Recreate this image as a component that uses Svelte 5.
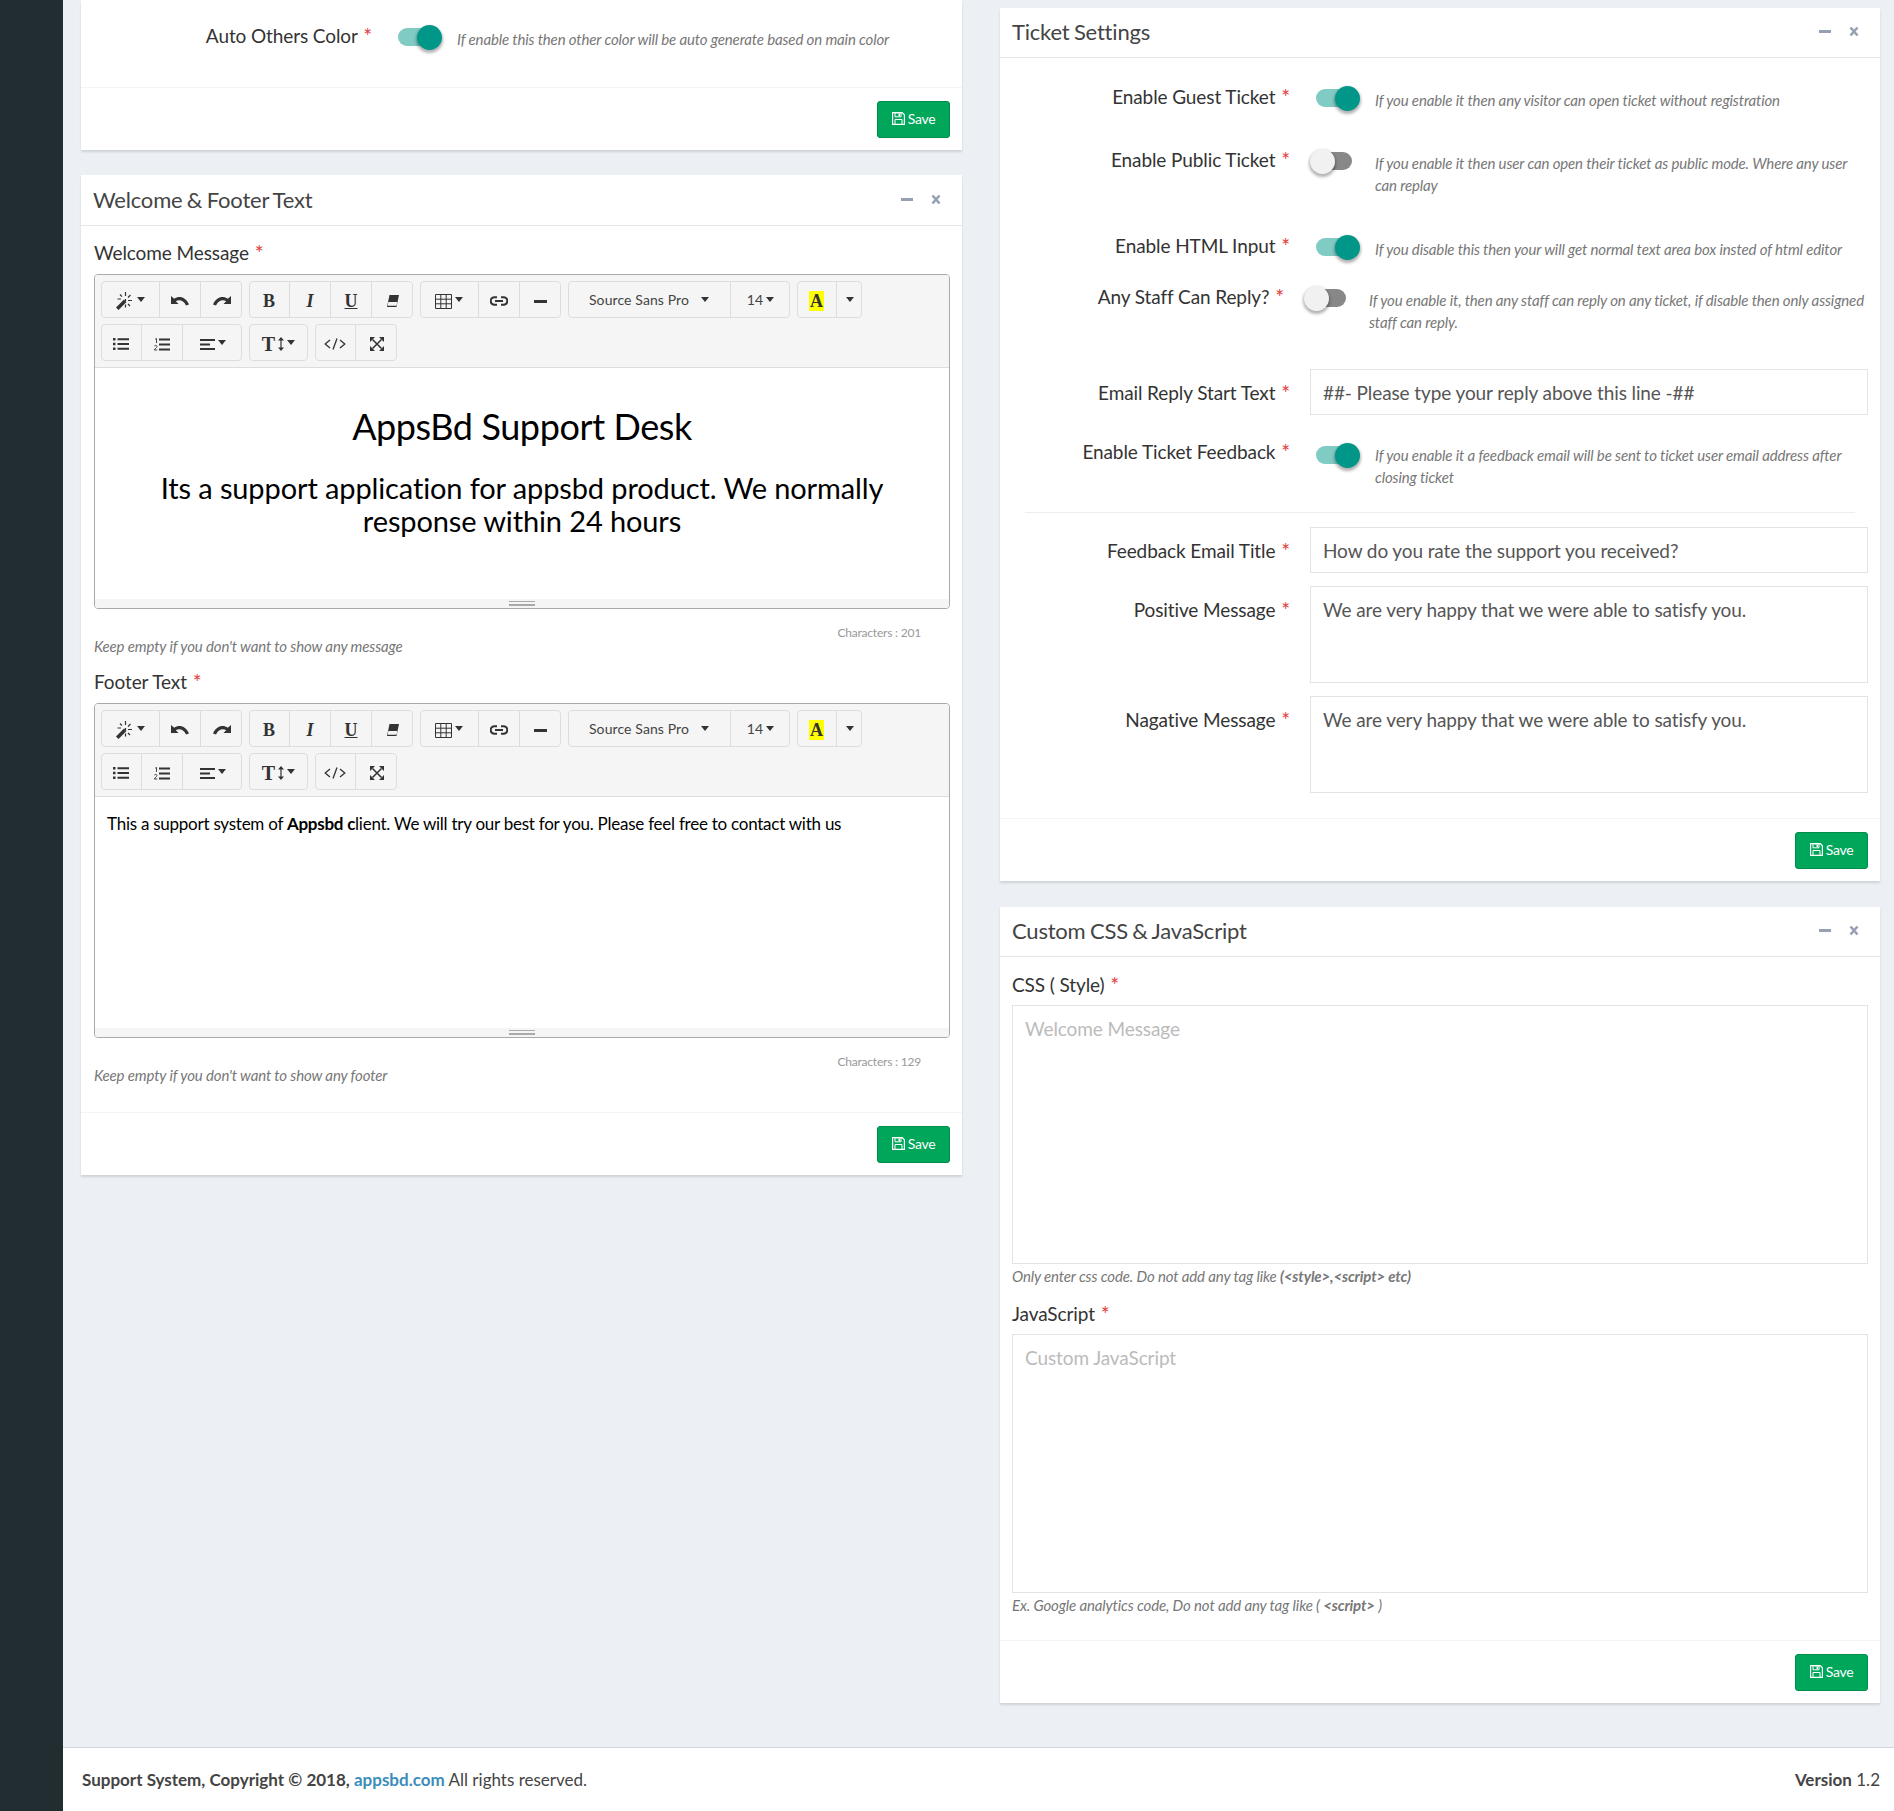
<script>
  // Summernote toolbar layout, rows of button groups.
  const toolbar = [
    [
      [{ icon: "wand", caret: true, w: "w59" }, { icon: "undo" }, { icon: "redo" }],
      [{ glyph: "B", cls: "g-b" }, { glyph: "I", cls: "g-i" }, { glyph: "U", cls: "g-u" }, { icon: "eraser" }],
      [{ icon: "table", caret: true, w: "w59" }, { icon: "link" }, { icon: "minus" }],
      [{ label: "Source Sans Pro", caret: true, w: "w163" }, { label: "14", caret: true, w: "w59" }],
      [{ glyph: "A", cls: "g-a", w: "w40" }, { caret: true, w: "w25" }]
    ],
    [
      [{ icon: "ul" }, { icon: "ol" }, { icon: "align", caret: true, w: "w59" }],
      [{ icon: "height", caret: true, w: "w59" }],
      [{ icon: "code" }, { icon: "full" }]
    ]
  ];
</script>

{#snippet star()}<span class="star">*</span>{/snippet}

{#snippet icon(name)}
  {#if name === "wand"}
    <svg width="18" height="18" viewBox="0 0 18 18"><path d="M0 15.500 L8 7.500 L10.500 10 L2.500 18 Z" fill="#333"/><path d="M9.500 0v4M9.500 7v2M4 2.500l2 2.200M14.500 3l-2.500 2.500M12 8.500h4M12 12l2 2M9.500 12.500v3M5 7H1.500" stroke="#333" stroke-width="1.200" fill="none"/></svg>
  {:else if name === "undo"}
    <svg width="18" height="12" viewBox="0 0 18 12"><path d="M0 1 V9 H7.500 L4.800 6.200 C8 4.500 12.500 5 15 10.500 L18 9.500 C15 2 8 0 3.200 3.800 Z" fill="#333"/></svg>
  {:else if name === "redo"}
    <svg width="18" height="12" viewBox="0 0 18 12"><path d="M18 1 V9 H10.500 L13.200 6.200 C10 4.500 5.500 5 3 10.500 L0 9.500 C3 2 10 0 14.800 3.800 Z" fill="#333"/></svg>
  {:else if name === "eraser"}
    <svg width="14" height="14" viewBox="0 0 14 14"><path d="M3.500 1 H13 L10.500 13 H1 Z" fill="#333"/><path d="M2.400 8 H11.300 L10.500 11.800 H1.700 Z" fill="#f5f5f5"/></svg>
  {:else if name === "table"}
    <svg width="17" height="15" viewBox="0 0 17 15"><path d="M.5 .5h16v14H.5zM.5 5.200h16M.5 9.800h16M5.800 .5v14M11.200 .5v14" stroke="#333" fill="none"/></svg>
  {:else if name === "link"}
    <svg width="18" height="10" viewBox="0 0 18 10"><path d="M7 1.200H4.500a3.800 3.800 0 0 0 0 7.600H7M11 1.200h2.500a3.800 3.800 0 0 1 0 7.600H11M5 5h8" stroke="#333" stroke-width="2" fill="none"/></svg>
  {:else if name === "minus"}
    <svg width="13" height="3" viewBox="0 0 13 3"><rect width="13" height="3" fill="#333"/></svg>
  {:else if name === "ul"}
    <svg width="16" height="12" viewBox="0 0 16 12"><path d="M0 0h2.500v2.500H0zM0 4.800h2.500v2.500H0zM0 9.500h2.500V12H0zM4.500 .3H16v2H4.500zM4.500 5H16v2H4.500zM4.500 9.700H16v2H4.500z" fill="#333"/></svg>
  {:else if name === "ol"}
    <svg width="16" height="13" viewBox="0 0 16 13"><path d="M5 .5h11v2H5zM5 5.500h11v2H5zM5 10.500h11v2H5z" fill="#333"/><path d="M1.200 1.200 2.500.4V5M.3 8.200c.4-1.200 3-1 2.700.4C2.800 9.700 1 10.500.3 12h3" stroke="#333" stroke-width=".9" fill="none"/></svg>
  {:else if name === "align"}
    <svg width="15" height="11" viewBox="0 0 15 11"><path d="M0 0h15v2H0zM0 4.500h10v2H0zM0 9h15v2H0z" fill="#333"/></svg>
  {:else if name === "height"}
    <span class="tt">T</span><svg width="6" height="14" viewBox="0 0 6 14"><path d="M3 1.500v11" stroke="#333" stroke-width="1.200"/><path d="M0 3.500 3 0l3 3.500zM0 10.500 3 14l3-3.500z" fill="#333"/></svg>
  {:else if name === "code"}
    <svg width="22" height="12" viewBox="0 0 22 12"><path d="M6 2 1.200 6 6 10M16 2l4.800 4L16 10M13 .5 9 11.500" stroke="#333" stroke-width="1.300" fill="none"/></svg>
  {:else if name === "full"}
    <svg width="14" height="14" viewBox="0 0 14 14"><path d="M2.500 2.500l9 9M11.500 2.500l-9 9" stroke="#333" stroke-width="1.500"/><path d="M0 0h5L0 5zM14 0H9l5 5zM0 14h5l-5-5zM14 14H9l5-5z" fill="#333"/></svg>
  {/if}
{/snippet}

{#snippet editor(body, count)}
  <div class="editor">
    <div class="toolbar">
      {#each toolbar as row}
        <div class="tool-row">
          {#each row as group}
            <div class="tool-group">
              {#each group as b}
                <div class="tool {b.w ?? ''}">
                  {#if b.icon}{@render icon(b.icon)}{/if}
                  {#if b.glyph}<span class={b.cls}>{b.glyph}</span>{/if}
                  {#if b.label}<span class="tool-label">{b.label}</span>{/if}
                  {#if b.caret}<i class="caret"></i>{/if}
                </div>
              {/each}
            </div>
          {/each}
        </div>
      {/each}
    </div>
    <div class="editable">{@render body()}</div>
    <div class="statusbar"><span class="grip"></span></div>
  </div>
  <div class="chars">Characters : {count}</div>
{/snippet}

{#snippet toggle(on)}
  <div class="toggle" class:on><span class="track"></span><span class="knob"></span></div>
{/snippet}

{#snippet save()}
  <div class="box-footer">
    <button class="btn-save">
      <svg width="13" height="13" viewBox="0 0 13 13"><path d="M.6.6h9.600l2.200 2.200v9.600H.6z" fill="none" stroke="#fff" stroke-width="1.200"/><path d="M3 .8h6v4H3zM3 7.500h7v5H3z" fill="none" stroke="#fff"/><rect x="6.500" y="1.500" width="1.500" height="2.500" fill="#fff"/></svg>
      Save
    </button>
  </div>
{/snippet}

{#snippet head(title)}
  <div class="box-header">
    <h3>{title}</h3>
    <span class="tool-minus"></span>
    <svg class="tool-x" width="10" height="11" viewBox="0 0 10 11"><path d="M1.500 1.500l7 8M8.500 1.500l-7 8" stroke="#97a0b3" stroke-width="2.600"/></svg>
  </div>
{/snippet}

{#snippet toggleRow(label, help, on, cls)}
  <div class="row {cls}">
    <div class="row-label">{label} {@render star()}</div>
    <div class="row-toggle">
      {@render toggle(on)}
      <p class="help">{help}</p>
    </div>
  </div>
{/snippet}

{#snippet welcomeBody()}
  <h2>AppsBd Support Desk</h2>
  <p class="lead">Its a support application for appsbd product. We normally response within 24 hours</p>
{/snippet}

{#snippet footerBody()}
  <p class="plain">This a support system of <b>Appsbd c</b>lient. We will try our best for you. Please feel free to contact with us</p>
{/snippet}

<div class="app">
  <aside class="sidebar"></aside>
  <div class="main">
    <div class="content">
      <div class="col">
        <section class="box">
          <div class="auto-body">
            {@render toggleRow("Auto Others Color", "If enable this then other color will be auto generate based on main color", true, "auto-row")}
          </div>
          {@render save()}
        </section>

        <section class="box welcome">
          {@render head("Welcome & Footer Text")}
          <div class="box-body">
            <div class="field-label">Welcome Message {@render star()}</div>
            {@render editor(welcomeBody, 201)}
            <p class="help block">Keep empty if you don't want to show any message</p>
            <div class="field-label second">Footer Text {@render star()}</div>
            {@render editor(footerBody, 129)}
            <p class="help block">Keep empty if you don't want to show any footer</p>
          </div>
          {@render save()}
        </section>
      </div>

      <div class="col right">
        <section class="box">
          {@render head("Ticket Settings")}
          <div class="settings">
            {@render toggleRow("Enable Guest Ticket", "If you enable it then any visitor can open ticket without registration", true, "h50")}
            {@render toggleRow("Enable Public Ticket", "If you enable it then user can open their ticket as public mode. Where any user can replay", false, "h73")}
            {@render toggleRow("Enable HTML Input", "If you disable this then your will get normal text area box insted of html editor", true, "h38")}
            {@render toggleRow("Any Staff Can Reply?", "If you enable it, then any staff can reply on any ticket, if disable then only assigned staff can reply.", false, "h76 tight")}

            <div class="row input-row email">
              <div class="row-label">Email Reply Start Text {@render star()}</div>
              <input class="ctl" value="##- Please type your reply above this line -##" />
            </div>

            {@render toggleRow("Enable Ticket Feedback", "If you enable it a feedback email will be sent to ticket user email address after closing ticket", true, "h78")}
            <hr />

            <div class="row input-row">
              <div class="row-label">Feedback Email Title {@render star()}</div>
              <input class="ctl" value="How do you rate the support you received?" />
            </div>
            <div class="row input-row">
              <div class="row-label">Positive Message {@render star()}</div>
              <textarea class="ctl area">We are very happy that we were able to satisfy you.</textarea>
            </div>
            <div class="row input-row last">
              <div class="row-label">Nagative Message {@render star()}</div>
              <textarea class="ctl area">We are very happy that we were able to satisfy you.</textarea>
            </div>
          </div>
          {@render save()}
        </section>

        <section class="box custom">
          {@render head("Custom CSS & JavaScript")}
          <div class="box-body code-body">
            <div class="field-label">CSS ( Style) {@render star()}</div>
            <textarea class="ctl code" placeholder="Welcome Message"></textarea>
            <p class="help code-help">Only enter css code. Do not add any tag like <b>(&lt;style&gt;,&lt;script&gt; etc)</b></p>
            <div class="field-label js">JavaScript {@render star()}</div>
            <textarea class="ctl code" placeholder="Custom JavaScript"></textarea>
            <p class="help code-help">Ex. Google analytics code, Do not add any tag like ( <b>&lt;script&gt;</b> )</p>
          </div>
          {@render save()}
        </section>
      </div>
    </div>

    <footer class="site-footer">
      <div><b>Support System, Copyright © 2018, <a href="#top">appsbd.com</a></b> All rights reserved.</div>
      <div><b>Version</b> 1.2</div>
    </footer>
  </div>
</div>

<style>
  :global(body) {
    margin: 0;
    background: #ecf0f5;
    font-family: "Lato", "Open Sans", sans-serif;
    color: #333;
  }

  .app {
    display: flex;
    min-height: 1811px;
  }

  .sidebar {
    width: 63px;
    flex: none;
    background: #222d32;
  }

  .main {
    flex: 1;
    display: flex;
    flex-direction: column;
  }

  .content {
    flex: 1;
    display: grid;
    grid-template-columns: 881px 880px;
    column-gap: 38px;
    padding: 0 14px 0 18px;
  }

  .right {
    padding-top: 8px;
  }

  .box {
    background: #fff;
    box-shadow: 0 2px 2px rgba(0, 0, 0, 0.12);
  }

  .welcome {
    margin-top: 25px;
  }

  .welcome .box-header {
    height: 51px;
  }

  .custom {
    margin-top: 26px;
  }

  .box-header {
    height: 50px;
    box-sizing: border-box;
    display: flex;
    align-items: center;
    padding: 0 21px 2px 12px;
    border-bottom: 1px solid #e6e6e6;
  }

  .box-header h3 {
    flex: 1;
    margin: 0;
    font-size: 22px;
    font-weight: 400;
    letter-spacing: -0.2px;
    word-spacing: -1px;
    color: #444;
  }

  .tool-minus {
    width: 12px;
    height: 3px;
    margin-right: 18px;
    background: #97a0b3;
  }

  .box-footer {
    display: flex;
    justify-content: flex-end;
    padding: 13px 12px 12px;
    border-top: 1px solid #f4f4f4;
  }

  .btn-save {
    width: 73px;
    height: 37px;
    padding: 0 0 2px;
    display: flex;
    align-items: center;
    justify-content: center;
    gap: 3px;
    background: #00a65a;
    border: 1px solid #008d4c;
    border-radius: 3px;
    color: #fff;
    font: 14px "Lato", sans-serif;
    letter-spacing: -0.3px;
  }

  .auto-body {
    height: 87px;
    padding-top: 19px;
    box-sizing: border-box;
  }

  .box-body {
    padding: 14px 12px 28px 13px;
  }

  .field-label {
    font-size: 19px;
    line-height: 26px;
    color: #333;
    letter-spacing: -0.1px;
    margin-bottom: 8px;
  }

  .field-label.second {
    margin-top: 14px;
  }

  .star {
    color: #e2403e;
    margin-left: 1px;
    font-size: 21px;
    line-height: 10px;
    position: relative;
    top: 1px;
  }

  .editor {
    border: 1px solid #a9a9a9;
    border-radius: 4px;
    overflow: hidden;
  }

  .toolbar {
    height: 93px;
    box-sizing: border-box;
    padding: 6px 6px 0;
    background: #f5f5f5;
    border-bottom: 1px solid #ddd;
  }

  .tool-row {
    display: flex;
    gap: 7px;
    margin-bottom: 6px;
  }

  .tool-group {
    display: flex;
    height: 37px;
    box-sizing: border-box;
    border: 1px solid #ddd;
    border-radius: 4px;
  }

  .tool {
    width: 41px;
    display: flex;
    align-items: center;
    justify-content: center;
    gap: 3px;
    box-sizing: border-box;
    border-right: 1px solid #ddd;
    color: #333;
  }

  .tool:first-child {
    margin-left: -1px;
  }

  .tool:last-child {
    margin-right: -1px;
    border-right: 0;
  }

  /* The glyph font sits a little under the middle of the button. */
  .tool svg {
    margin-top: 3px;
  }

  .w59 { width: 59px; }
  .w163 { width: 163px; gap: 12px; }
  .w40 { width: 40px; }
  .w25 { width: 25px; }

  .tool-label {
    font-size: 14px;
    letter-spacing: 0.1px;
    color: #444;
  }

  .caret {
    width: 0;
    height: 0;
    border-top: 5px solid #333;
    border-left: 4px solid transparent;
    border-right: 4px solid transparent;
  }

  .g-b, .g-u, .g-a, .g-i, .tt {
    font-family: "Liberation Serif", serif;
    font-weight: 700;
    font-size: 18px;
    line-height: 18px;
    color: #333;
    margin-top: 2px;
  }

  .g-i { font-style: italic; }
  .g-u { text-decoration: underline; }
  .g-a { background: #ff0; padding: 0 1px; line-height: 20px; }
  .tt { font-size: 20px; }

  .editable {
    height: 231px;
    padding: 11px 12px;
    box-sizing: border-box;
    text-align: center;
    color: #000;
    background: #fff;
  }

  .editable h2 {
    margin: 22px 0 0;
    font-size: 36px;
    line-height: 50px;
    font-weight: 400;
    letter-spacing: -0.4px;
  }

  .lead {
    margin: 20px 40px 0;
    font-size: 29px;
    line-height: 33px;
    letter-spacing: -0.12px;
  }

  .plain {
    margin: 3px 0 0;
    text-align: left;
    font-size: 17px;
    line-height: 26px;
    letter-spacing: -0.25px;
  }

  .statusbar {
    height: 9px;
    background: #f5f5f5;
    display: flex;
    justify-content: center;
    align-items: center;
  }

  .grip {
    width: 26px;
    height: 5px;
    border-top: 1px solid #a9a9a9;
    border-bottom: 1px solid #a9a9a9;
    background: linear-gradient(#a9a9a9, #a9a9a9) 0 2px / 100% 1px no-repeat;
    box-sizing: border-box;
  }

  .chars {
    margin: 15px 29px 0 0;
    text-align: right;
    font-size: 12px;
    line-height: 18px;
    color: #999;
    letter-spacing: -0.2px;
  }

  .help {
    margin: 0;
    font-size: 15px;
    line-height: 22px;
    font-style: italic;
    color: #777;
    letter-spacing: -0.14px;
  }

  .help.block {
    line-height: 18px;
    margin-top: -5px;
  }

  .settings {
    padding: 22px 12px 25px 0;
  }

  .row {
    display: grid;
    grid-template-columns: 290px 1fr;
    column-gap: 20px;
    margin-bottom: 13px;
  }

  .row-label {
    padding-top: 4px;
    text-align: right;
    font-size: 19px;
    line-height: 26px;
    letter-spacing: -0.1px;
    color: #333;
    white-space: nowrap;
  }

  .row-toggle {
    display: flex;
    gap: 15px;
    padding-top: 6px;
  }

  .row-toggle .help {
    padding-top: 3px;
  }

  .auto-row { grid-template-columns: 291px 1fr; margin: 0; }
  .h50 { height: 50px; }
  .h73 { height: 73px; }
  .h38 { height: 38px; }
  .h76 { height: 76px; }
  .h78 { height: 78px; margin-bottom: 0; }
  .h78 .row-label { padding-top: 5px; }
  .h78 .row-toggle { padding-top: 9px; }
  .h78 .row-toggle .help { padding-top: 1px; }
  .tight { grid-template-columns: 284px 1fr; }

  .email {
    margin-bottom: 19px;
  }

  .input-row .row-label {
    padding-top: 11px;
  }

  .input-row.last {
    margin-bottom: 0;
  }

  .toggle {
    position: relative;
    flex: none;
    width: 50px;
    height: 26px;
  }

  .track {
    position: absolute;
    left: 6px;
    top: 3px;
    width: 36px;
    height: 18px;
    border-radius: 9px;
    background: #888;
  }

  .knob {
    position: absolute;
    left: 0;
    top: 0;
    width: 25px;
    height: 25px;
    border-radius: 50%;
    background: #f1f1f1;
    box-shadow: 0 2px 3px 1px rgba(0, 0, 0, 0.3);
  }

  .toggle.on .track { background: #80cbc4; }
  .toggle.on .knob { left: 25px; background: #009688; }

  hr {
    border: 0;
    border-top: 1px solid #eee;
    margin: 0 13px 14px 25px;
  }

  .ctl {
    display: block;
    width: 100%;
    box-sizing: border-box;
    height: 46px;
    padding: 0 12px;
    border: 1px solid #e3e3e3;
    background: #fff;
    font: 19px "Lato", sans-serif;
    letter-spacing: -0.1px;
    color: #555;
    outline: 0;
    resize: none;
  }

  .area {
    height: 97px;
    padding-top: 11px;
    line-height: 24px;
  }

  .code-body {
    padding: 15px 12px 25px 12px;
  }

  .code-body .field-label {
    margin-bottom: 7px;
  }

  .code {
    height: 259px;
    padding-top: 11px;
    line-height: 24px;
    overflow: hidden;
  }

  .code::placeholder {
    color: #bbb;
  }

  .code-help {
    line-height: 20px;
    margin-top: 2px;
  }

  .field-label.js {
    margin-top: 15px;
  }

  .site-footer {
    height: 63px;
    display: flex;
    justify-content: space-between;
    align-items: center;
    padding: 0 14px 0 19px;
    background: #fff;
    border-top: 1px solid #d2d6de;
    font-size: 17px;
    color: #444;
  }

  .site-footer a {
    color: #3c8dbc;
    text-decoration: none;
  }
</style>
